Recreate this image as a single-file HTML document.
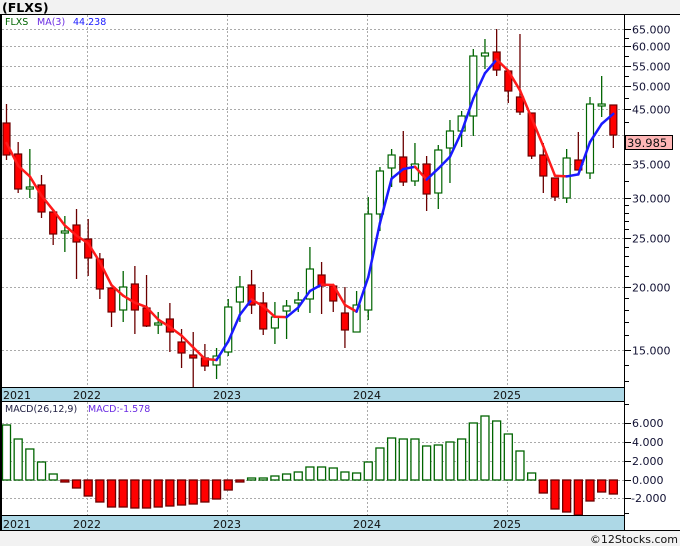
<!DOCTYPE html>
<html><head><meta charset="utf-8">
<style>
html,body{margin:0;padding:0;background:#f2f2f2;}
body{width:680px;height:546px;overflow:hidden;position:relative;font-family:"DejaVu Sans","Liberation Sans",sans-serif;}
svg{position:absolute;left:0;top:0;}
</style></head><body>
<svg id="s" width="680" height="546" viewBox="0 0 680 546" xmlns="http://www.w3.org/2000/svg" font-family="DejaVu Sans, Liberation Sans, sans-serif">
<rect x="0" y="0" width="680" height="546" fill="#f2f2f2"/>
<rect x="0" y="14" width="680" height="517" fill="#ffffff"/>
<g id="grid"></g>
<g id="cand"></g>
<g id="ma"></g>
<g id="macd"></g>
<rect x="0" y="388" width="624" height="13" fill="#add8e6"/>
<rect x="0" y="516" width="624" height="14" fill="#add8e6"/>
<line x1="0" y1="387.5" x2="625" y2="387.5" stroke="#000" stroke-width="1"/>
<line x1="0" y1="401.5" x2="625" y2="401.5" stroke="#000" stroke-width="1"/>
<line x1="0" y1="515.5" x2="625" y2="515.5" stroke="#000" stroke-width="1"/>
<line x1="0" y1="530.5" x2="680" y2="530.5" stroke="#000" stroke-width="1"/>
<line x1="0" y1="14.5" x2="680" y2="14.5" stroke="#000" stroke-width="1"/>
<line x1="1" y1="14" x2="1" y2="531" stroke="#000" stroke-width="2"/>
<line x1="624.5" y1="14" x2="624.5" y2="531" stroke="#000" stroke-width="1"/>
<g id="ticks"></g>
<g font-size="11" fill="#111">
<text x="3" y="399">2021</text><text x="73" y="399">2022</text><text x="213" y="399">2023</text><text x="353" y="399">2024</text><text x="493" y="399">2025</text>
<text x="3" y="528">2021</text><text x="73" y="528">2022</text><text x="213" y="528">2023</text><text x="353" y="528">2024</text><text x="493" y="528">2025</text>
</g>
<text x="2" y="12" font-size="12.5" font-weight="bold" fill="#000">(FLXS)</text>
<text x="5" y="25" font-size="9.5" fill="#006400">FLXS</text>
<text x="37" y="25" font-size="9.5" fill="#6a2be2">MA(3)</text>
<text x="73" y="25" font-size="9.5" fill="#1a1aff">44.238</text>
<text x="5" y="412" font-size="9.5" fill="#222244">MACD(26,12,9)</text>
<text x="88" y="412" font-size="9.5" fill="#6a2be2">MACD:-1.578</text>
<g id="plabels" font-size="11" fill="#111133"></g>
<rect x="625.5" y="135.5" width="47" height="14" fill="#ffb6b6" stroke="#000"/>
<text x="627" y="147" font-size="11.5" fill="#111">39.985</text>
<text x="678" y="543" font-size="11" fill="#111" text-anchor="end">©12Stocks.com</text>
</svg>
<script>
var NS="http://www.w3.org/2000/svg";
function el(p,t,a){var e=document.createElementNS(NS,t);for(var k in a)e.setAttribute(k,a[k]);document.getElementById(p).appendChild(e);return e;}
function Y(p){return 29+218.6*Math.log(65/p);}
[65,60,55,50,45,40,35,30,25,20,15].forEach(function(p){var y=Math.round(Y(p))+0.5;el('grid','line',{x1:2,x2:624,y1:y,y2:y,stroke:'#aaa','stroke-dasharray':'2,2'});
 el('ticks','line',{x1:624,x2:631,y1:y,y2:y,stroke:'#000'});
 if(p!=40){var t=el('plabels','text',{x:632,y:y+4});t.textContent=p.toFixed(3);}});
var minor=[];for(var v=13;v<30;v++)minor.push(v);for(var v=32.5;v<65;v+=5)minor.push(v);
minor.forEach(function(p){var y=Math.round(Y(p))+0.5;el('ticks','line',{x1:624,x2:629,y1:y,y2:y,stroke:'#000'});});
[87,227,367,507].forEach(function(x){el('grid','line',{x1:x+.5,x2:x+.5,y1:15,y2:387,stroke:'#aaa','stroke-dasharray':'2,2'});
 el('grid','line',{x1:x+.5,x2:x+.5,y1:402,y2:515,stroke:'#aaa','stroke-dasharray':'2,2'});});
[423,442,461,480,498].forEach(function(y,i){el('grid','line',{x1:2,x2:624,y1:y+.5,y2:y+.5,stroke:'#aaa','stroke-dasharray':'2,2'});
 el('ticks','line',{x1:624,x2:631,y1:y+.5,y2:y+.5,stroke:'#000'});
 var t=el('plabels','text',{x:(i==4?631:632),y:y+4});t.textContent=['6.000','4.000','2.000','0.000','-2.000'][i];});
[404,513].forEach(function(y){el('ticks','line',{x1:624,x2:629,y1:y+.5,y2:y+.5,stroke:'#000'});});
var C=[[0,123,155,104,160],[0,154,189,142,193],[1,187,189,149,198],[0,185,212,175,218],[0,212,234,212,245],[1,231,233,216,252],[0,225,242,209,279],[0,239,258,219,276],[0,259,289,253,299],[0,288,312,288,327],
[1,287,310,271,322],[0,284,310,266,334],[0,308,326,275,327],[1,323,325,312,334],[0,319,332,303,352],[0,342,353,329,368],[0,355,358,332,387],[0,358,366,344,371],[1,356,365,348,379],[1,307,352,299,356],
[1,287,302,276,322],[0,285,305,270,314],[0,303,329,292,335],[1,317,328,302,344],[1,306,311,300,339],[1,300,303,292,312],[1,269,299,247,313],[0,275,286,262,314],[0,286,301,286,312],[0,313,330,287,348],
[1,305,332,291,332],[1,214,310,197,320],[1,171,214,167,231],[1,155,168,149,187],[0,157,182,131,186],[1,164,181,143,186],[0,164,194,156,211],[1,150,193,145,209],[1,131,148,120,183],[1,116,131,111,147],
[1,56,116,49,136],[1,53,56,39,69],[0,52,70,29,76],[0,71,91,70,103],[0,97,112,34,115],[0,113,156,113,159],[0,155,176,143,193],[0,178,197,178,201],[1,158,198,149,203],[0,160,170,132,170],
[1,104,173,97,179],[1,104,106,76,117],[0,105,135,105,148]];
function X(i){return 6.5+11.67*i;}
var closes=[];
C.forEach(function(c,i){var x=X(i);var col=c[0]?'#006400':'#6b0000';
 el('cand','line',{x1:x,x2:x,y1:c[3],y2:c[4],stroke:col,'stroke-width':1.3});
 el('cand','rect',{x:x-3.5,y:c[1],width:7,height:Math.max(c[2]-c[1],1.5),fill:c[0]?'#fff':'#ff0000',stroke:c[0]?'#006400':'#6b0000','stroke-width':1.2});
 var cy=c[0]?c[1]:c[2];closes.push(65*Math.exp(-(cy-29)/218.6));});
var ma=[];for(var i=0;i<C.length;i++){var a=closes[Math.max(0,i-2)],b=closes[Math.max(0,i-1)],d=closes[i];ma.push(Y((a+b+d)/3));}
ma[0]=143;
for(var i=1;i<ma.length;i++){el('ma','line',{x1:X(i-1),y1:ma[i-1],x2:X(i),y2:ma[i],stroke:ma[i]>ma[i-1]?'#ff1a1a':'#1a1aff','stroke-width':2.5,'stroke-linecap':'round'});}
var M=[425,439,449,462,474,482,488,496,502,507,507,508,508,507,506,505,504,502,499,490,482,478,478,476,474,472,467,467,468,472,473,462,448,438,439,439,446,445,442,439,423,416,421,434,451,473,493,509,512,515,501,492,494];
M.forEach(function(y,i){var x=X(i);var g=y<480;
 el('macd','rect',{x:x-4,y:g?y:480,width:8,height:Math.max(Math.abs(y-480),1.5),fill:g?'#fff':'#ff0000',stroke:g?'#006400':'#6b0000','stroke-width':1.3});});
</script>
</body></html>
